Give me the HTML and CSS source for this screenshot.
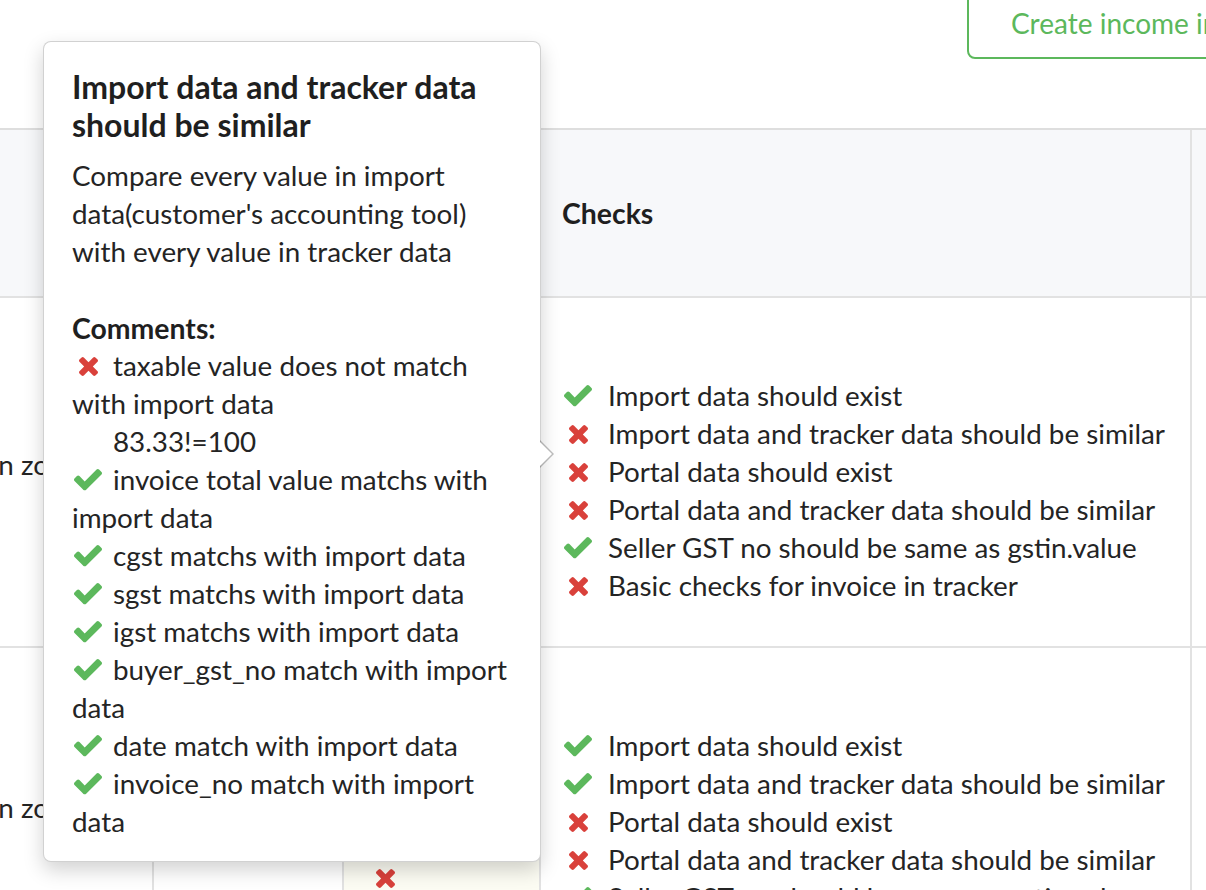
FILE: index.html
```html
<!DOCTYPE html>
<html lang="en">
<head>
<meta charset="utf-8">
<title>Reconciliation checks</title>
<link rel="stylesheet" href="styles.css">
</head>
<body>
<svg class="defs" width="0" height="0" aria-hidden="true">
  <defs>
    <symbol id="i-ok" viewBox="121 334 1550 1188">
      <path d="M1671 566q0 40-28 68l-724 724-136 136q-28 28-68 28t-68-28l-136-136-362-362q-28-28-28-68t28-68l136-136q28-28 68-28t68 28l294 295 656-657q28-28 68-28t68 28l136 136q28 28 28 68z"/>
    </symbol>
    <symbol id="i-no" viewBox="110 366 1188 1188">
      <path d="M1298 1322q0 40-28 68l-136 136q-28 28-68 28t-68-28l-294-294-294 294q-28 28-68 28t-68-28l-136-136q-28-28-28-68t28-68l294-294-294-294q-28-28-28-68t28-68l136-136q28-28 68-28t68 28l294 294 294-294q28-28 68-28t68 28l136 136q28 28 28 68t-28 68l-294 294 294 294q28 28 28 68z"/>
    </symbol>
  </defs>
</svg>

<div class="toolbar">
  <button class="btn-create">Create income invoice</button>
</div>

<div class="table">
  <div class="row head">
    <div class="cell c1"></div>
    <div class="cell c2"></div>
    <div class="cell c3"></div>
    <div class="cell c4"><span class="th">Checks</span></div>
    <div class="cell c5"></div>
  </div>

  <div class="row r1">
    <div class="cell c1"><span class="src">Created in zoho</span></div>
    <div class="cell c2"></div>
    <div class="cell c3 status"></div>
    <div class="cell c4">
      <ul class="checks">
        <li><span class="ic ok"><svg class="svg-ok"><use href="#i-ok"/></svg></span>Import data should exist</li>
        <li><span class="ic no"><svg class="svg-no"><use href="#i-no"/></svg></span>Import data and tracker data should be similar</li>
        <li><span class="ic no"><svg class="svg-no"><use href="#i-no"/></svg></span>Portal data should exist</li>
        <li><span class="ic no"><svg class="svg-no"><use href="#i-no"/></svg></span>Portal data and tracker data should be similar</li>
        <li><span class="ic ok"><svg class="svg-ok"><use href="#i-ok"/></svg></span>Seller GST no should be same as gstin.value</li>
        <li><span class="ic no"><svg class="svg-no"><use href="#i-no"/></svg></span>Basic checks for invoice in tracker</li>
      </ul>
    </div>
    <div class="cell c5"></div>
  </div>

  <div class="row r2">
    <div class="cell c1"><span class="src">Created in zoho</span></div>
    <div class="cell c2"></div>
    <div class="cell c3 status">
      <span class="ic no"><svg class="svg-no"><use href="#i-no"/></svg></span>
    </div>
    <div class="cell c4">
      <ul class="checks">
        <li><span class="ic ok"><svg class="svg-ok"><use href="#i-ok"/></svg></span>Import data should exist</li>
        <li><span class="ic ok"><svg class="svg-ok"><use href="#i-ok"/></svg></span>Import data and tracker data should be similar</li>
        <li><span class="ic no"><svg class="svg-no"><use href="#i-no"/></svg></span>Portal data should exist</li>
        <li><span class="ic no"><svg class="svg-no"><use href="#i-no"/></svg></span>Portal data and tracker data should be similar</li>
        <li><span class="ic ok"><svg class="svg-ok"><use href="#i-ok"/></svg></span>Seller GST no should be same as gstin.value</li>
        <li><span class="ic no"><svg class="svg-no"><use href="#i-no"/></svg></span>Basic checks for invoice in tracker</li>
      </ul>
    </div>
    <div class="cell c5"></div>
  </div>
</div>

<div class="popover">
  <h3 class="pop-title">Import data and tracker data should be similar</h3>
  <p class="pop-desc">Compare every value in import data(customer's accounting tool) with every value in tracker data</p>
  <div class="pop-comments">
    <div class="pop-label">Comments:</div>
    <div class="cmt"><span class="ic no"><svg class="svg-no"><use href="#i-no"/></svg></span>taxable value does not match with import data</div>
    <div class="cmt-detail">83.33!=100</div>
    <div class="cmt"><span class="ic ok"><svg class="svg-ok"><use href="#i-ok"/></svg></span>invoice total value matchs with import data</div>
    <div class="cmt"><span class="ic ok"><svg class="svg-ok"><use href="#i-ok"/></svg></span>cgst matchs with import data</div>
    <div class="cmt"><span class="ic ok"><svg class="svg-ok"><use href="#i-ok"/></svg></span>sgst matchs with import data</div>
    <div class="cmt"><span class="ic ok"><svg class="svg-ok"><use href="#i-ok"/></svg></span>igst matchs with import data</div>
    <div class="cmt"><span class="ic ok"><svg class="svg-ok"><use href="#i-ok"/></svg></span>buyer_gst_no match with import data</div>
    <div class="cmt"><span class="ic ok"><svg class="svg-ok"><use href="#i-ok"/></svg></span>date match with import data</div>
    <div class="cmt"><span class="ic ok"><svg class="svg-ok"><use href="#i-ok"/></svg></span>invoice_no match with import data</div>
  </div>
</div>
</body>
</html>
```

FILE: styles.css
```css
* { box-sizing: border-box; }

html, body {
  margin: 0;
  padding: 0;
}

body {
  width: 1206px;
  height: 890px;
  overflow: hidden;
  position: relative;
  background: #ffffff;
  font-family: Lato, "Open Sans", "Liberation Sans", sans-serif;
  font-size: 27.8px;
  line-height: 38px;
  color: #242424;
}

.defs { position: absolute; width: 0; height: 0; overflow: hidden; }

/* toolbar */
.toolbar {
  height: 128px;
  display: flex;
  align-items: flex-start;
  padding-left: 967px;
  white-space: nowrap;
}

.btn-create {
  flex: none;
  margin-top: -13px;
  padding: 15px 42px;
  border: 2px solid #5cb85c;
  border-radius: 8px;
  background: #ffffff;
  color: #5cb85c;
  font-family: inherit;
  font-size: 28px;
  line-height: 38px;
  white-space: nowrap;
}

/* table */
.table {
  border-top: 2px solid #dedede;
}

.row {
  display: grid;
  grid-template-columns: 154px 190px 197px 651px 1fr;
}

.cell {
  border-right: 2px solid #e2e2e2;
  border-bottom: 2px solid #e2e2e2;
}

.cell.c5 { border-right: 0; }

.head .cell {
  background: #f7f8fa;
  height: 168px;
  display: flex;
  align-items: center;
}

.head .c4 { padding: 0 0 0 21px; }

.th {
  font-weight: 700;
  font-size: 28.4px;
  color: #1f1f1f;
}

.c1 {
  display: flex;
  align-items: center;
  overflow: hidden;
}

.src {
  display: block;
  white-space: nowrap;
  text-indent: -112px;
  margin-bottom: 14px;
}

.status {
  background: #fcfcf3;
}

.r2 .status {
  padding-top: 211px;
  padding-left: 27px;
}

.c4 {
  padding: 79px 0 41px 21px;
}

.r2 .c4 { padding-bottom: 27px; }

.checks {
  list-style: none;
  margin: 0;
  padding: 0;
}

.checks li {
  display: flex;
  align-items: center;
  height: 38px;
  white-space: nowrap;
}

/* icons */
.ic {
  display: inline-flex;
  align-items: center;
  justify-content: center;
  width: 28px;
  height: 38px;
  flex: none;
  vertical-align: top;
}

.checks .ic {
  margin-left: 2px;
  margin-right: 16px;
}

.ic.ok { fill: #5cb85c; }
.ic.no { fill: #d9413b; }

.svg-ok { width: 28px; height: 21.5px; }
.svg-no { width: 19px; height: 19px; }

/* popover */
.popover {
  position: absolute;
  left: 43px;
  top: 41px;
  width: 498px;
  padding: 26px 28px 20px 28px;
  background: #ffffff;
  border: 1px solid rgba(0, 0, 0, 0.18);
  border-radius: 8px;
  box-shadow: 0 8px 20px rgba(0, 0, 0, 0.18);
}

.popover::before,
.popover::after {
  content: "";
  position: absolute;
  top: 398px;
  width: 0;
  height: 0;
  border-style: solid;
  border-color: transparent;
}

.popover::before {
  left: 100%;
  border-width: 14px 0 14px 14px;
  border-left-color: rgba(0, 0, 0, 0.25);
}

.popover::after {
  left: 100%;
  margin-left: -1px;
  top: 399px;
  border-width: 13px 0 13px 13px;
  border-left-color: #ffffff;
}

.pop-title {
  margin: 0 0 13px;
  font-size: 32px;
  line-height: 38px;
  font-weight: 700;
  color: #1f1f1f;
}

.pop-desc {
  margin: 0 0 38px;
}

.pop-label {
  font-weight: 700;
  font-size: 28.4px;
  color: #1f1f1f;
}

.cmt .ic {
  margin-left: 2px;
  margin-right: 11px;
}

.cmt-detail {
  padding-left: 41px;
}
```
